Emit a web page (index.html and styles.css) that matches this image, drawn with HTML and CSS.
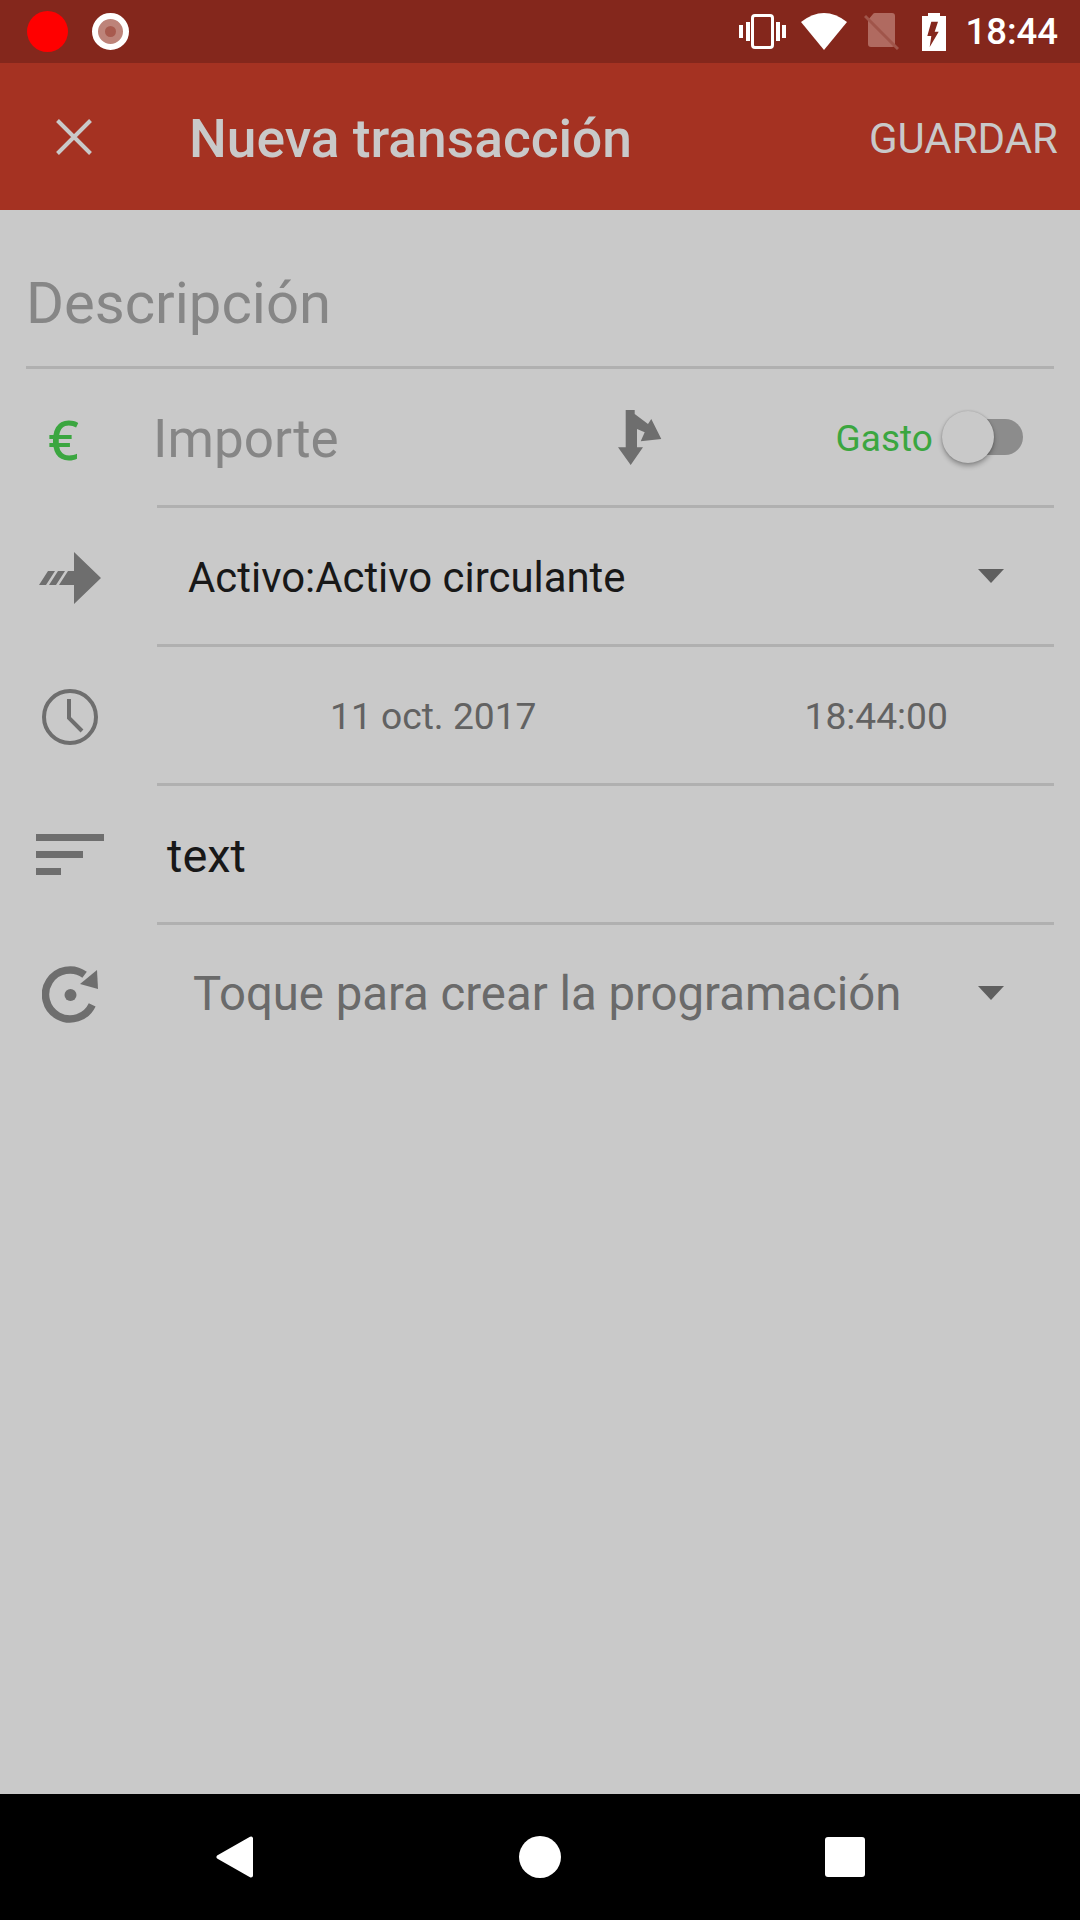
FILE: index.html
```html
<!DOCTYPE html>
<html lang="es">

<head>
  <meta charset="UTF-8" />
  <meta name="viewport" content="width=device-width, initial-scale=1.0" />
  <title>Nueva transacción</title>

  <link rel="stylesheet" href="styles.css">
</head>

<body>
  <div class="screen">

    <div class="status-bar">
      <span class="rec-dot"></span>
      <span class="rec-ring"><span class="rec-core"></span></span>
      <div class="status-icons">
        <svg class="ic-vibrate" width="47" height="35" viewBox="0 0 47 35">
          <rect x="0" y="11" width="4" height="13" fill="#fff" />
          <rect x="7" y="8" width="4" height="19" fill="#fff" />
          <rect x="13.5" y="1.5" width="20" height="32" rx="2.5" fill="none" stroke="#fff" stroke-width="3" />
          <rect x="37" y="8" width="4" height="19" fill="#fff" />
          <rect x="43" y="11" width="4" height="13" fill="#fff" />
        </svg>
        <svg class="ic-wifi" width="46" height="37" viewBox="0 0 46 37">
          <path d="M0 9 Q23 -9 46 9 L23 37 Z" fill="#fff" />
        </svg>
        <svg class="ic-sim" width="35" height="37" viewBox="0 0 35 37">
          <path d="M4 7 L9 1 Q9.5 0 11 0 L28 0 Q31 0 31 3 L31 31 Q31 34 28 34 L7 34 Q4 34 4 31 Z" fill="#b06a60" />
          <path d="M1 3 L34 36" stroke="#a0554a" stroke-width="3" />
        </svg>
        <svg class="ic-battery" width="24" height="38" viewBox="0 0 24 38">
          <path d="M6 0 H18 V3 H24 V38 H0 V3 H6 Z" fill="#fff" />
          <path d="M9.3 8.7 H16 L12.7 18.7 H16.7 L7.7 34 L9.3 23 H5.3 Z" fill="#84271c" />
        </svg>
        <span class="clock">18:44</span>
      </div>
    </div>

    <header class="toolbar">
      <svg class="ic-close" width="36" height="36" viewBox="0 0 36 36">
        <path d="M1.5 1.5 L34.5 34.5 M34.5 1.5 L1.5 34.5" stroke="#c9c9c9" stroke-width="4" fill="none" />
      </svg>
      <h1 class="title">Nueva transacción</h1>
      <span class="save">GUARDAR</span>
    </header>

    <main class="form">
      <div class="desc-row">Descripción</div>

      <div class="row">
        <div class="row-icon"><span class="euro">€</span></div>
        <div class="row-body amount-row">
          <span class="amount">Importe</span>
          <svg class="ic-split" width="44" height="55" viewBox="0 0 44 55">
            <path d="M7.7 0 H16.7 V4 L30 14 L33.3 9 L43.3 29 L22.7 31.3 L26.7 22.3 L19 19 V37.3 H25 L12.7 55 L0 37.3 H7.7 Z" fill="#6e6e6e" />
          </svg>
          <span class="type-label">Gasto</span>
          <span class="toggle"><span class="toggle-thumb"></span></span>
        </div>
      </div>

      <div class="row">
        <div class="row-icon">
          <svg width="62" height="52" viewBox="0 0 62 52">
            <path d="M35 0 L62 26 L35 52 V33 H20 L29 19 H35 Z M0 33 L9 19 H16 L7 33 Z M10 33 L19 19 H26 L17 33 Z" fill="#6e6e6e" />
          </svg>
        </div>
        <div class="row-body select-row">
          <span class="account">Activo:Activo circulante</span>
          <span class="caret"></span>
        </div>
      </div>

      <div class="row">
        <div class="row-icon">
          <svg width="56" height="56" viewBox="0 0 56 56">
            <circle cx="28" cy="28" r="26" fill="none" stroke="#6e6e6e" stroke-width="4" />
            <path d="M27 10 V29 L40 42" fill="none" stroke="#6e6e6e" stroke-width="4" />
          </svg>
        </div>
        <div class="row-body date-row">
          <span class="date">11 oct. 2017</span>
          <span class="time">18:44:00</span>
        </div>
      </div>

      <div class="row">
        <div class="row-icon">
          <div class="notes-icon">
            <span class="bar-long"></span>
            <span class="bar-mid"></span>
            <span class="bar-short"></span>
          </div>
        </div>
        <div class="row-body notes-row">text</div>
      </div>

      <div class="row">
        <div class="row-icon">
          <svg width="56" height="57" viewBox="0 0 56 57">
            <path d="M50.2 38.9 A24.5 24.5 0 1 1 42.6 8.8" fill="none" stroke="#6e6e6e" stroke-width="7.5" />
            <path d="M55 4 L56 23 L38 18 Z" fill="#6e6e6e" />
            <circle cx="28.5" cy="29" r="6" fill="#6e6e6e" />
          </svg>
        </div>
        <div class="row-body select-row no-line">
          <span class="schedule">Toque para crear la programación</span>
          <span class="caret"></span>
        </div>
      </div>
    </main>

    <nav class="nav-bar">
      <svg width="38" height="42" viewBox="0 0 38 42">
        <path d="M35 2.5 V39.5 L2.5 21 Z" fill="#fff" stroke="#fff" stroke-width="4" stroke-linejoin="round" />
      </svg>
      <span class="nav-home"></span>
      <span class="nav-recent"></span>
    </nav>

  </div>
</body>

</html>
```

FILE: styles.css
```css
body {
  margin: 0;
  font-family: Roboto, "Liberation Sans", sans-serif;
  background: #c9c9c9;
}

.screen {
  width: 1080px;
  height: 1920px;
  display: flex;
  flex-direction: column;
  overflow: hidden;
}

/* status bar */
.status-bar {
  height: 63px;
  background: #84271c;
  display: flex;
  align-items: center;
  padding: 0 22px 0 27px;
}

.rec-dot {
  width: 41px;
  height: 41px;
  border-radius: 50%;
  background: #ff0000;
}

.rec-ring {
  width: 37px;
  height: 37px;
  margin-left: 24px;
  border-radius: 50%;
  background: #bd8379;
  border: 6px solid #fff;
  box-sizing: border-box;
  display: flex;
  align-items: center;
  justify-content: center;
}

.rec-core {
  width: 11px;
  height: 11px;
  border-radius: 50%;
  background: #a85a4e;
}

.status-icons {
  margin-left: auto;
  display: flex;
  align-items: center;
}

.ic-wifi {
  margin-left: 15px;
}

.ic-sim {
  margin-left: 17px;
}

.ic-battery {
  margin-left: 23px;
}

.clock {
  margin-left: 19px;
  color: #fff;
  font-size: 36.5px;
  font-weight: 500;
}

/* toolbar */
.toolbar {
  height: 147px;
  background: #a53222;
  display: flex;
  align-items: center;
  padding: 0 22px 0 56px;
}

.title {
  margin: 5px 0 0 97px;
  color: #c9c9c9;
  font-size: 53.3px;
  font-weight: 500;
}

.save {
  margin: 3px 0 0 auto;
  color: #c9c9c9;
  font-size: 42px;
}

/* form */
.form {
  flex: 1;
}

.desc-row {
  height: 126px;
  padding-top: 30px;
  margin: 0 26px;
  border-bottom: 3px solid #b0b0b0;
  display: flex;
  align-items: center;
  font-size: 58px;
  color: #868686;
}

.row {
  height: 139px;
  display: flex;
}

.row-icon {
  width: 140px;
  margin-right: 17px;
  display: flex;
  align-items: center;
  justify-content: center;
}

.row-body {
  flex: 1;
  margin-right: 26px;
  border-bottom: 3px solid #b0b0b0;
  display: flex;
  align-items: center;
}

.no-line {
  border-bottom-color: transparent;
}

.euro {
  margin-right: 13px;
  font-family: "Noto Sans", sans-serif;
  font-size: 54px;
  font-weight: 500;
  color: #3ba640;
}

.amount {
  margin: 3px 0 0 -4px;
  font-size: 53px;
  color: #868686;
}

.ic-split {
  margin-left: 279px;
}

.type-label {
  margin: 2px 0 0 174px;
  font-size: 37px;
  color: #3ba640;
}

.toggle {
  position: relative;
  width: 73px;
  height: 36px;
  margin-left: 17px;
  border-radius: 18px;
  background: #8c8c8c;
}

.toggle-thumb {
  position: absolute;
  left: -8px;
  top: -8px;
  width: 52px;
  height: 52px;
  border-radius: 50%;
  background: #c9c9c9;
  box-shadow: 0 3px 5px rgba(0, 0, 0, 0.3), 0 0 2px rgba(0, 0, 0, 0.2);
}

.select-row {
  padding-left: 31px;
}

.account {
  margin-top: 2px;
  font-size: 41.9px;
  color: #181818;
}

.schedule {
  margin: 2px 0 0 5px;
  font-size: 47.3px;
  color: #6a6a6a;
}

.caret {
  margin-left: auto;
  margin-right: 50px;
  width: 0;
  height: 0;
  border-left: 13px solid transparent;
  border-right: 13px solid transparent;
  border-top: 14px solid #5f5f5f;
}

.date-row {
  padding-top: 2px;
  color: #626262;
  font-size: 37.2px;
}

.date {
  margin-left: 173px;
}

.time {
  margin-left: 268px;
}

.notes-row {
  padding: 2px 0 0 10px;
  font-size: 47px;
  color: #181818;
}

.notes-icon {
  display: flex;
  flex-direction: column;
  gap: 10px;
  width: 68px;
  margin-bottom: 3px;
}

.notes-icon span {
  display: block;
  height: 7px;
  background: #6e6e6e;
}

.bar-long {
  width: 68px;
}

.bar-mid {
  width: 47px;
}

.bar-short {
  width: 25px;
}

/* nav bar */
.nav-bar {
  height: 126px;
  background: #000;
  display: grid;
  grid-template-columns: repeat(3, 305px);
  justify-content: center;
  justify-items: center;
  align-items: center;
}

.nav-home {
  width: 42px;
  height: 42px;
  border-radius: 50%;
  background: #fff;
}

.nav-recent {
  width: 40px;
  height: 40px;
  border-radius: 3px;
  background: #fff;
}
```
